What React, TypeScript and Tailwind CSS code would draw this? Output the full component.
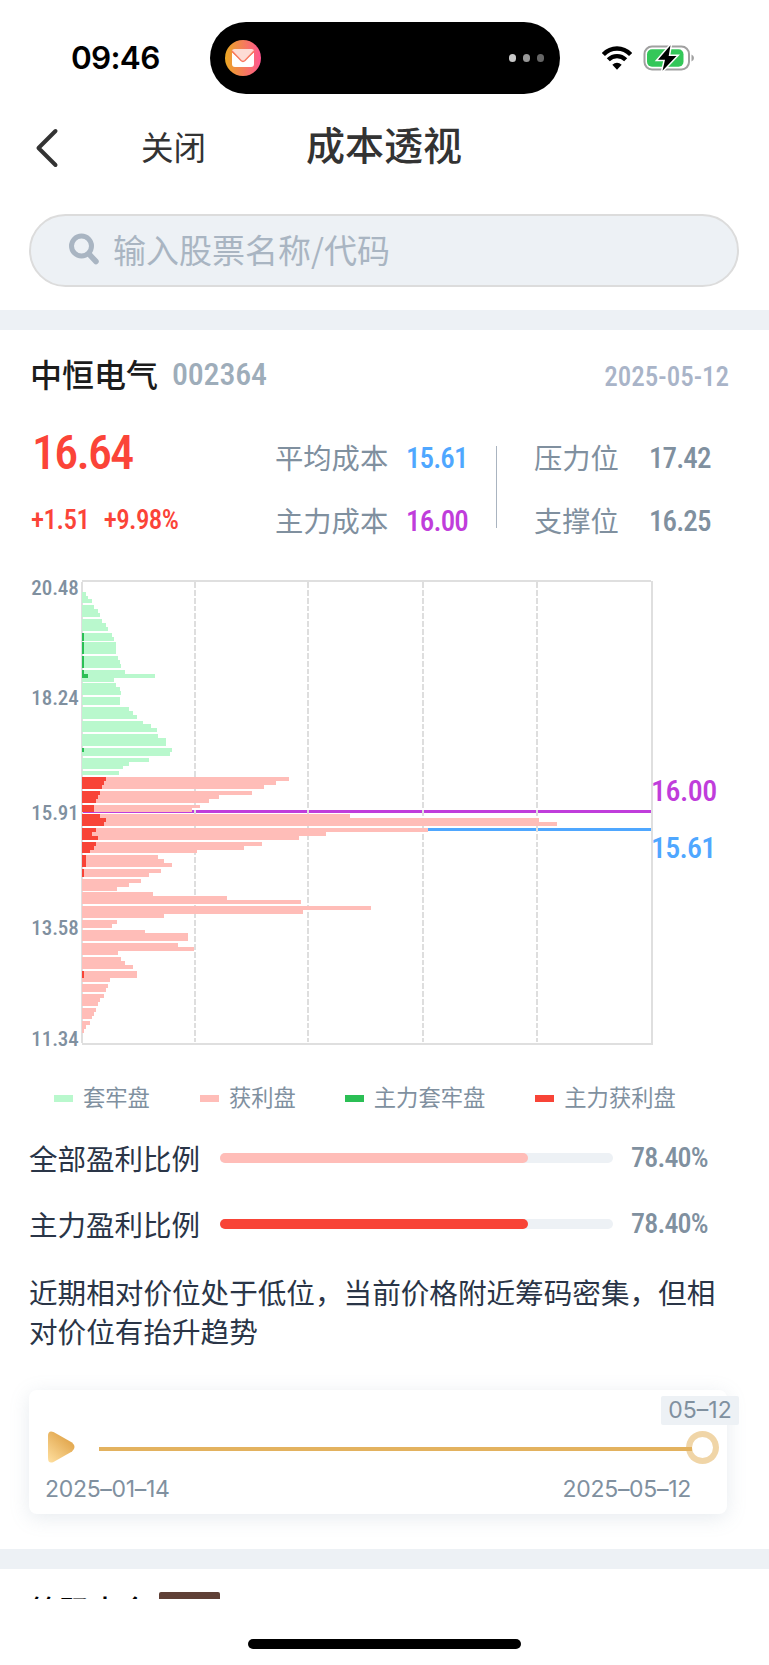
type Row = [number, number?]
type Group = { at: number; rows: Row[] }

// `at` is the vertical slot, each row is [total, main force]
const trapped: Group[] = [
    { at: 0, rows: [[12], [18], [30]] },
    { at: 7, rows: [[36], [47], [53]] },
    { at: 14, rows: [[59], [71], [77]] },
    { at: 21, rows: [[89, 6], [94, 6]] },
    { at: 26, rows: [[100, 6], [100, 6], [100, 6]] },
    { at: 33, rows: [[106, 6], [112, 6], [117, 6]] },
    { at: 40, rows: [[129, 6], [218, 18], [94]] },
    { at: 47, rows: [[100], [112], [117]] },
    { at: 54, rows: [[112], [112]] },
    { at: 59, rows: [[141], [153], [165]] },
    { at: 66, rows: [[182], [206], [223]] },
    { at: 73, rows: [[228], [252], [252]] },
    { at: 80, rows: [[270, 6], [264]] },
    { at: 85, rows: [[201], [141], [123]] },
    { at: 92, rows: [[111]] },
]

const profit: Group[] = [
    { at: 95, rows: [[621, 71], [581, 66], [545, 59]] },
    { at: 102, rows: [[510, 53], [411, 47], [381, 41]] },
    { at: 109, rows: [[352, 35], [329, 35]] },
    { at: 114, rows: [[804, 53], [1371, 71], [1425, 66]] },
    { at: 121, rows: [[1038, 41], [732, 30], [651, 47]] },
    { at: 128, rows: [[540, 41], [486, 35], [345, 24]] },
    { at: 135, rows: [[228, 12], [246, 12], [270, 12]] },
    { at: 142, rows: [[235, 6], [200, 6]] },
    { at: 147, rows: [[176], [141], [105]] },
    { at: 154, rows: [[212], [434], [657]] },
    { at: 161, rows: [[867], [663], [246]] },
    { at: 168, rows: [[105], [89]] },
    { at: 173, rows: [[188], [318], [318]] },
    { at: 180, rows: [[288], [336], [106]] },
    { at: 187, rows: [[117], [129], [153]] },
    { at: 194, rows: [[165, 6], [165, 6], [83]] },
    { at: 201, rows: [[77], [71]] },
    { at: 206, rows: [[65], [53], [47]] },
    { at: 213, rows: [[41], [35], [29]] },
    { at: 220, rows: [[24], [12], [6]] },
]

const legend = [
    { label: '套牢盘', color: 'bg-[#b9f8cd]', space: 'mr-[50px]' },
    { label: '获利盘', color: 'bg-[#ffbdb8]', space: 'mr-[49px]' },
    { label: '主力套牢盘', color: 'bg-[#2bbf55]', space: 'mr-[50px]' },
    { label: '主力获利盘', color: 'bg-[#f84437]', space: '' },
]

const SLOT = 5.86

function Bars({ groups, light, dark }: { groups: Group[]; light: string; dark: string }) {
    return (
        <>
            {groups.map((g) =>
                g.rows.map(([total, main], i) => {
                    const y = 35 + (g.at + i * 2) * SLOT
                    return (
                        <g key={`${g.at}-${i}`}>
                            <rect x={4} y={y} width={total} height={SLOT * 2} fill={light} />
                            {main && <rect x={4} y={y} width={main} height={SLOT * 2} fill={dark} />}
                        </g>
                    )
                })
            )}
        </>
    )
}

function Chart() {
    return (
        <svg viewBox="0 0 1717 1395" className="block h-[465px] w-[572.33px] shrink-0" shapeRendering="crispEdges">
            <rect x={4} y={691} width={1706} height={9} fill="#c03ddb" />
            <rect x={4} y={744} width={1706} height={9} fill="#4fa7ff" />
            {[342, 682, 1027, 1367].map((x) => (
                <line key={x} x1={x} x2={x} y1={6} y2={1385} stroke="#dedede" strokeWidth={6} strokeDasharray="17.6 6" />
            ))}
            <path d="M2 6V1390M4 3H1710M1713 3V1392M4 1392H1717" stroke="#dfdfdf" strokeWidth={6} fill="none" />
            <Bars groups={trapped} light="#b9f8cd" dark="#2bbf55" />
            <Bars groups={profit} light="#ffbdb8" dark="#f84437" />
        </svg>
    )
}

function Num({ children, className }: { children: string; className: string }) {
    return (
        <span className={`font-['Roboto'] font-medium whitespace-nowrap leading-none [font-stretch:85%] ${className}`}>
            {children}
        </span>
    )
}

function StatusBar() {
    return (
        <div className="flex h-[116px] pt-[22px] shrink-0">
            <div className="w-[210px] pl-[71px] font-['Inter'] text-[31.500px] font-semibold leading-[72px] text-black tracking-[-0.7px]">
                09:46
            </div>
            <div className="flex h-[72px] w-[350px] items-center justify-between rounded-full bg-black pr-4 pl-[15px]">
                <svg viewBox="0 0 36 36" className="size-9">
                    <defs>
                        <linearGradient id="mail">
                            <stop offset="0" stopColor="#eaa722" />
                            <stop offset="1" stopColor="#ff5590" />
                        </linearGradient>
                    </defs>
                    <circle cx="18" cy="18" r="18" fill="url(#mail)" />
                    <path d="M7 12.500L18 22L29 12.500V24Q29 27 26 27H10Q7 27 7 24Z" fill="#fff" />
                    <path d="M7 11Q7 9 9.500 9H26.500Q29 9 29 11L20 20.500Q18 22.300 16 20.500Z" fill="#fddcd5" />
                    <path d="M7 11L16 20.500Q18 22.300 20 20.500L29 11" fill="none" stroke="#f97a62" strokeWidth="1.400" />
                </svg>
                <div className="flex gap-[6.500px]">
                    <span className="size-[7.500px] rounded-full bg-[#c8c8c8]" />
                    <span className="size-[7.500px] rounded-full bg-[#989898]" />
                    <span className="size-[7.500px] rounded-full bg-[#666]" />
                </div>
            </div>
            <div className="flex h-[72px] items-center pl-[42px]">
                <svg viewBox="0 0 30 24" className="h-6 w-[30px]" fill="none" stroke="#000" strokeWidth="4.300">
                    <path d="M1.400 8.500C9 .500 21 .500 28.600 8.500" />
                    <path d="M6.300 13.800C11.200 8.900 18.800 8.900 23.700 13.800" />
                    <path d="M10.300 18.800Q15 14.500 19.700 18.800L15 23.800Z" fill="#000" stroke="none" />
                </svg>
                <svg viewBox="0 0 52 26" className="ml-[11px] h-[26px] w-[52px]">
                    <rect x="1.500" y="1.500" width="44.500" height="23" rx="7.500" fill="none" stroke="#a0a0a0" strokeWidth="2" />
                    <path d="M48.500 9.500Q51 10.500 51 13T48.500 16.500Z" fill="#a0a0a0" />
                    <rect x="4" y="4.300" width="36.500" height="17.400" rx="5" fill="#34c759" />
                    <path d="M27.500 .300L15 14.800H22L19.500 25.700L33.500 11H25.700Z" fill="#000" stroke="#fff" strokeWidth="3" paintOrder="stroke" />
                </svg>
            </div>
        </div>
    )
}

function Ratio({ label, color }: { label: string; color: string }) {
    return (
        <div className="flex h-[66px] items-center pl-[29px]">
            <span className="w-[191px] text-[28.500px] text-[#2a3547]">{label}</span>
            <div className="h-[10px] w-[393px] rounded-full bg-[#edf1f5]">
                <div className={`h-full w-[78.4%] rounded-full ${color}`} />
            </div>
            <Num className="ml-[18px] text-[28px] tracking-[-0.8px] text-[#80909f]">78.40%</Num>
        </div>
    )
}

function App() {
    return (
        <div className="flex h-[1665px] w-[769px] flex-col overflow-hidden bg-white font-['Noto_Sans_CJK_SC',sans-serif]">
            <StatusBar />

            <div className="flex h-[64px] shrink-0 items-center text-[#333]">
                <svg viewBox="0 0 24 40" className="ml-[35px] h-10 w-6" fill="none" stroke="#333" strokeWidth="4" strokeLinecap="round" strokeLinejoin="round">
                    <path d="M20.500 3L3.500 20L20.500 37" />
                </svg>
                <span className="ml-[82px] pb-1 text-[32.500px] leading-none">关闭</span>
                <span className="ml-[100px] pb-[9px] text-[39px] font-medium leading-none">成本透视</span>
            </div>

            <div className="mx-[29px] mt-[34px] flex h-[73px] w-[710px] shrink-0 items-center rounded-full border-2 border-[#dcdcdc] bg-[#edf1f5] pl-[38px]">
                <svg viewBox="0 0 30 32" className="-mt-[3px] h-8 w-[30px]" fill="none" stroke="#a9b5c2" strokeLinecap="round">
                    <circle cx="12.500" cy="13" r="10" strokeWidth="5" />
                    <path d="M20 21L27 28.500" strokeWidth="5.500" />
                </svg>
                <span className="ml-[14px] pb-[2px] text-[33px] leading-none text-[#a9b5c2]">输入股票名称/代码</span>
            </div>

            <div className="mt-[23px] h-5 shrink-0 bg-[#edf1f5]" />

            <div className="flex h-[88px] shrink-0 items-center pr-10 pl-[30px]">
                <span className="pb-[2px] text-[32px] font-medium leading-none text-[#1c1c1c]">中恒电气</span>
                <Num className="ml-[14px] text-[32px] tracking-[-0.2px] text-[#9eadba]">002364</Num>
                <Num className="ml-auto pt-[7px] text-[27px] text-[#a9b4c8]">2025-05-12</Num>
            </div>

            <div className="flex h-[162px] shrink-0 pt-[8px]">
                <div className="flex w-[275px] flex-col pt-[3px] pl-8 text-[#fb4438]">
                    <Num className="text-[48px] tracking-[-1.800px]">16.64</Num>
                    <div className="-ml-px mt-[30px] flex gap-[14px]">
                        <Num className="text-[27px] tracking-[-0.5px]">+1.51</Num>
                        <Num className="text-[27px] tracking-[-0.6px]">+9.98%</Num>
                    </div>
                </div>
                <div className="flex w-[221px] flex-col gap-[34px] pt-[16px] text-[28.300px] leading-[29px] text-[#80909f]">
                    <div className="flex items-center">
                        <span className="w-[131px]">平均成本</span>
                        <Num className="translate-y-0.5 text-[29px] tracking-[-0.9px] text-[#4fa7ff]">15.61</Num>
                    </div>
                    <div className="flex items-center">
                        <span className="w-[131px]">主力成本</span>
                        <Num className="translate-y-0.5 text-[29px] tracking-[-0.8px] text-[#c03ddb]">16.00</Num>
                    </div>
                </div>
                <div className="mt-[20px] h-[82px] w-px bg-[#aab4c0]" />
                <div className="flex flex-col gap-[34px] pt-[16px] pl-[37px] text-[28.300px] leading-[29px] text-[#80909f]">
                    <div className="flex items-center">
                        <span className="w-[115px]">压力位</span>
                        <Num className="translate-y-0.5 text-[29px] tracking-[-0.9px]">17.42</Num>
                    </div>
                    <div className="flex items-center">
                        <span className="w-[115px]">支撑位</span>
                        <Num className="translate-y-0.5 text-[29px] tracking-[-0.9px]">16.25</Num>
                    </div>
                </div>
            </div>

            <div className="flex h-[465px] shrink-0">
                <div className="-mt-[2px] flex w-[80.700px] flex-col items-end pr-[2px] text-[#80909f]">
                    <Num className="mb-[89px] text-[21px] tracking-[-0.1px]">20.48</Num>
                    <Num className="mb-[94px] text-[21px] tracking-[-0.1px]">18.24</Num>
                    <Num className="mb-[94px] text-[21px] tracking-[-0.1px]">15.91</Num>
                    <Num className="mb-[90px] text-[21px] tracking-[-0.1px]">13.58</Num>
                    <Num className="text-[21px] tracking-[-0.1px]">11.34</Num>
                </div>
                <Chart />
                <div className="-ml-[2px] flex flex-col pt-[196px]">
                    <Num className="text-[30px] tracking-[-0.5px] text-[#c03ddb]">16.00</Num>
                    <Num className="mt-[27px] text-[30px] tracking-[-0.8px] text-[#4fa7ff]">15.61</Num>
                </div>
            </div>

            <div className="mt-[36px] flex h-[32px] shrink-0 items-center pl-[54px] text-[22.300px] leading-none text-[#80909f]">
                {legend.map((item) => (
                    <div key={item.label} className={`flex items-center ${item.space}`}>
                        <span className={`mt-[3px] mr-[10px] h-[6.500px] w-[19px] ${item.color}`} />
                        <span className="pb-[2px]">{item.label}</span>
                    </div>
                ))}
            </div>

            <div className="mt-3 shrink-0">
                <Ratio label="全部盈利比例" color="bg-[#ffbdb8]" />
                <Ratio label="主力盈利比例" color="bg-[#f84437]" />
            </div>

            <p className="mt-[16px] w-[720px] shrink-0 pl-[29px] text-[28.600px] leading-[38.700px] text-[#2a3547]">
                近期相对价位处于低位，当前价格附近筹码密集，但相对价位有抬升趋势
            </p>

            <div className="relative mt-[39.500px] ml-[29px] h-[124px] w-[698px] shrink-0 rounded-lg bg-white shadow-[0_4px_20px_rgba(120,145,165,0.18)]">
                <div className="flex items-center pt-[40px] pl-[18px]">
                    <svg viewBox="0 0 28 34" className="h-[34px] w-7">
                        <defs>
                            <linearGradient id="play" x1="0" y1="1" x2="0.6" y2="0.2">
                                <stop offset="0" stopColor="#ffe0a0" />
                                <stop offset="1" stopColor="#e4ab54" />
                            </linearGradient>
                        </defs>
                        <path d="M1 6Q1 0 6.500 2L25 12.500Q30 17 25 21.500L6.500 32Q1 34 1 28Z" fill="url(#play)" />
                    </svg>
                    <div className="mt-[4px] ml-[24px] h-[4px] w-[593px] bg-[#e3b25f]" />
                </div>
                <div className="flex justify-between pt-[11px] pr-[36px] pl-4 font-['Inter'] text-[23px] leading-[28px] tracking-[-0.3px] text-[#80909f]">
                    <span>2025–01–14</span>
                    <span>2025–05–12</span>
                </div>
                <span className="absolute top-[41px] left-[657px] size-[33px] rounded-full border-[6px] border-[#e3b25f]/55 bg-white bg-clip-padding" />
                <span className="absolute top-[6px] right-[-12px] flex h-[29px] w-[78px] items-center justify-center rounded-xs bg-[#edf1f5] font-['Inter'] text-[23px] text-[#80909f]">
                    05–12
                </span>
            </div>

            <div className="mt-[35px] h-5 shrink-0 bg-[#edf1f5]" />

            <div className="flex h-[30px] shrink-0 items-start overflow-hidden pt-[23px] pl-[30px]">
                <span className="w-[129px] pt-[2px] text-[30px] font-medium leading-none text-black">筹码大全</span>
                <span className="h-[34px] w-[61px] shrink-0 rounded-xs bg-[#5f4036]" />
            </div>

            <div className="mt-[40px] ml-[248px] h-[10px] w-[273px] shrink-0 rounded-full bg-black" />
        </div>
    )
}

export default App
